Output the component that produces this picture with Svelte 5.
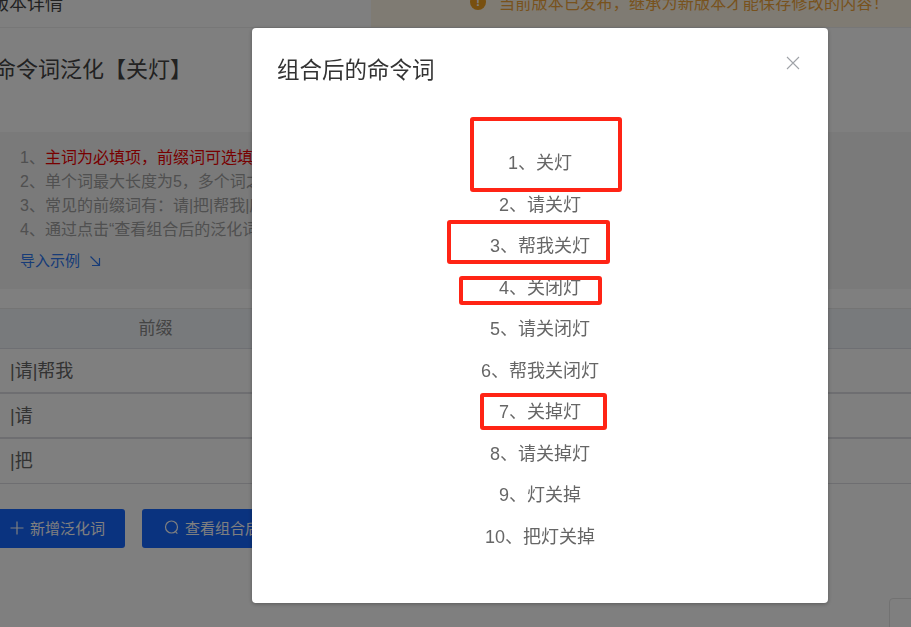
<script lang="ts">
  const tips = [
    { text: '主词为必填项，前缀词可选填项', red: true },
    { text: '单个词最大长度为5，多个词之间用竖线分隔，可以组合生成', red: false },
    { text: '常见的前缀词有：请|把|帮我|麻烦|给我|我要', red: false },
    { text: '通过点击“查看组合后的泛化词”可以查看结果', red: false }
  ];

  const rows = ['|请|帮我', '|请', '|把'];

  const words = ['关灯', '请关灯', '帮我关灯', '关闭灯', '请关闭灯', '帮我关闭灯', '关掉灯', '请关掉灯', '灯关掉', '把灯关掉'];

  // red marks drawn on top of the screenshot, relative to the dialog
  const marks = [
    { left: 218, top: 89, width: 152, height: 75 },
    { left: 195, top: 192, width: 163, height: 44 },
    { left: 207, top: 248, width: 143, height: 29 },
    { left: 228, top: 365, width: 127, height: 37 }
  ];
</script>

<div class="page">
  <header class="topbar">
    <span class="crumb">版本详情</span>
    <div class="notice">
      <span class="notice-icon">!</span>
      当前版本已发布，继承为新版本才能保存修改的内容！
    </div>
  </header>

  <h2 class="title">命令词泛化【关灯】</h2>

  <section class="tips">
    {#each tips as tip, i}
      <p>{i + 1}、<span class:red={tip.red}>{tip.text}</span></p>
    {/each}
    <a class="example" href="#top">
      导入示例
      <svg width="12" height="12" viewBox="0 0 12 12" fill="none" stroke="currentColor" stroke-width="1.2">
        <path d="M1.5 1.5 L10.5 10.5 M10.5 3 V10.5 H3" />
      </svg>
    </a>
  </section>

  <div class="table">
    <div class="thead"><span>前缀</span></div>
    {#each rows as row}
      <div class="trow">{row}</div>
    {/each}
  </div>

  <div class="actions">
    <button>
      <svg width="14" height="14" viewBox="0 0 14 14" fill="none" stroke="currentColor" stroke-width="1.2">
        <path d="M7 0.5 V13.5 M0.5 7 H13.5" />
      </svg>
      新增泛化词
    </button>
    <button class="wide">
      <svg width="15" height="15" viewBox="0 0 15 15" fill="none" stroke="currentColor" stroke-width="1.2">
        <circle cx="7.5" cy="7" r="6" />
        <path d="M11.2 11.4 L13.4 13.6" />
      </svg>
      查看组合后的泛化词
    </button>
  </div>

  <div class="corner"></div>
</div>

<div class="mask">
  <div class="dialog">
    <div class="dialog-head">
      <h3>组合后的命令词</h3>
      <svg class="close" width="14" height="14" viewBox="0 0 14 14" fill="none" stroke="currentColor" stroke-width="1.1">
        <path d="M1 1 L13 13 M13 1 L1 13" />
      </svg>
    </div>
    <ul class="words">
      {#each words as word, i}
        <li>{i + 1}、{word}</li>
      {/each}
    </ul>
    {#each marks as m}
      <div class="mark" style="left:{m.left}px;top:{m.top}px;width:{m.width}px;height:{m.height}px"></div>
    {/each}
  </div>
</div>

<style>
  :global(body) {
    margin: 0;
    background: #fff;
    font-family: "Liberation Sans", "Noto Sans CJK SC", sans-serif;
  }

  .page {
    position: relative;
    height: 627px;
    overflow: hidden;
    color: #444;
  }

  .topbar {
    display: flex;
    justify-content: space-between;
    align-items: center;
    height: 47px;
    margin-top: -20px;
    border-bottom: 1px solid #eee;
  }

  .crumb {
    margin-top: -4px;
    margin-left: -9px;
    font-size: 18px;
  }

  .notice {
    display: flex;
    align-items: center;
    width: 540px;
    height: 100%;
    box-sizing: border-box;
    padding-left: 99px;
    padding-bottom: 4px;
    background: #fff6e6;
    color: #f0a53a;
    font-size: 16px;
    letter-spacing: 0.25px;
  }

  .notice-icon {
    width: 16px;
    height: 16px;
    margin-right: 13px;
    border-radius: 50%;
    background: #f0a020;
    color: #fff;
    font-size: 12px;
    font-weight: bold;
    line-height: 16px;
    text-align: center;
  }

  .title {
    margin: 27px 0 47px -6px;
    font-size: 22px;
    font-weight: 400;
    line-height: 30px;
  }

  .tips {
    height: 157px;
    box-sizing: border-box;
    padding: 14px 20px;
    background: #f5f5f5;
    color: #a0a0a0;
    font-size: 16px;
    line-height: 24px;
  }

  .tips p {
    margin: 0;
    white-space: nowrap;
  }

  .red {
    color: #f00000;
  }

  .example {
    display: flex;
    align-items: center;
    gap: 9px;
    margin-top: 7px;
    color: #2f78f0;
    font-size: 15px;
    text-decoration: none;
  }

  .table {
    margin-top: 19px;
    border-top: 1px solid #e8e8e8;
    font-size: 18px;
  }

  .thead {
    height: 39px;
    background: #f1f4f8;
    border-bottom: 1px solid #dcdfe6;
    color: #888;
    font-size: 17px;
    line-height: 39px;
  }

  .thead span {
    display: block;
    width: 311px;
    text-align: center;
  }

  .trow {
    height: 43px;
    padding-left: 10px;
    border-bottom: 2px solid #dcdde2;
    color: #666;
    line-height: 45px;
  }

  .trow:last-child {
    height: 44px;
    border-bottom-width: 1px;
  }

  .actions {
    display: flex;
    gap: 17px;
    margin: 25px 0 0 -10px;
  }

  button {
    display: flex;
    align-items: center;
    justify-content: center;
    gap: 6px;
    width: 135px;
    height: 39px;
    padding: 0 0 2px;
    border: 0;
    border-radius: 3px;
    background: #1566ff;
    color: #fff;
    font-family: inherit;
    font-size: 15px;
  }

  button.wide {
    width: 200px;
  }

  .corner {
    position: absolute;
    left: 889px;
    top: 598px;
    width: 40px;
    height: 60px;
    border: 1px solid #e4e4e4;
    border-radius: 4px;
  }

  .mask {
    position: fixed;
    inset: 0;
    z-index: 10;
    background: rgba(0, 0, 0, 0.5);
  }

  .dialog {
    position: relative;
    width: 576px;
    height: 575px;
    margin: 28px 0 0 252px;
    border-radius: 4px;
    background: #fff;
    box-shadow: 0 1px 4px rgba(0, 0, 0, 0.3);
  }

  .dialog-head {
    display: flex;
    justify-content: space-between;
    padding: 26px 28px 0 25px;
  }

  h3 {
    margin: 0;
    color: #333;
    font-size: 22.5px;
    font-weight: 400;
    line-height: 34px;
  }

  .close {
    margin-top: 2px;
    color: #a0a3a8;
  }

  .words {
    margin: 0;
    padding: 55px 0 0;
    list-style: none;
    color: #666;
    font-size: 18px;
    line-height: 41.5px;
    text-align: center;
  }

  .mark {
    position: absolute;
    box-sizing: border-box;
    border: 4px solid #ff2415;
    border-radius: 3px;
  }
</style>
